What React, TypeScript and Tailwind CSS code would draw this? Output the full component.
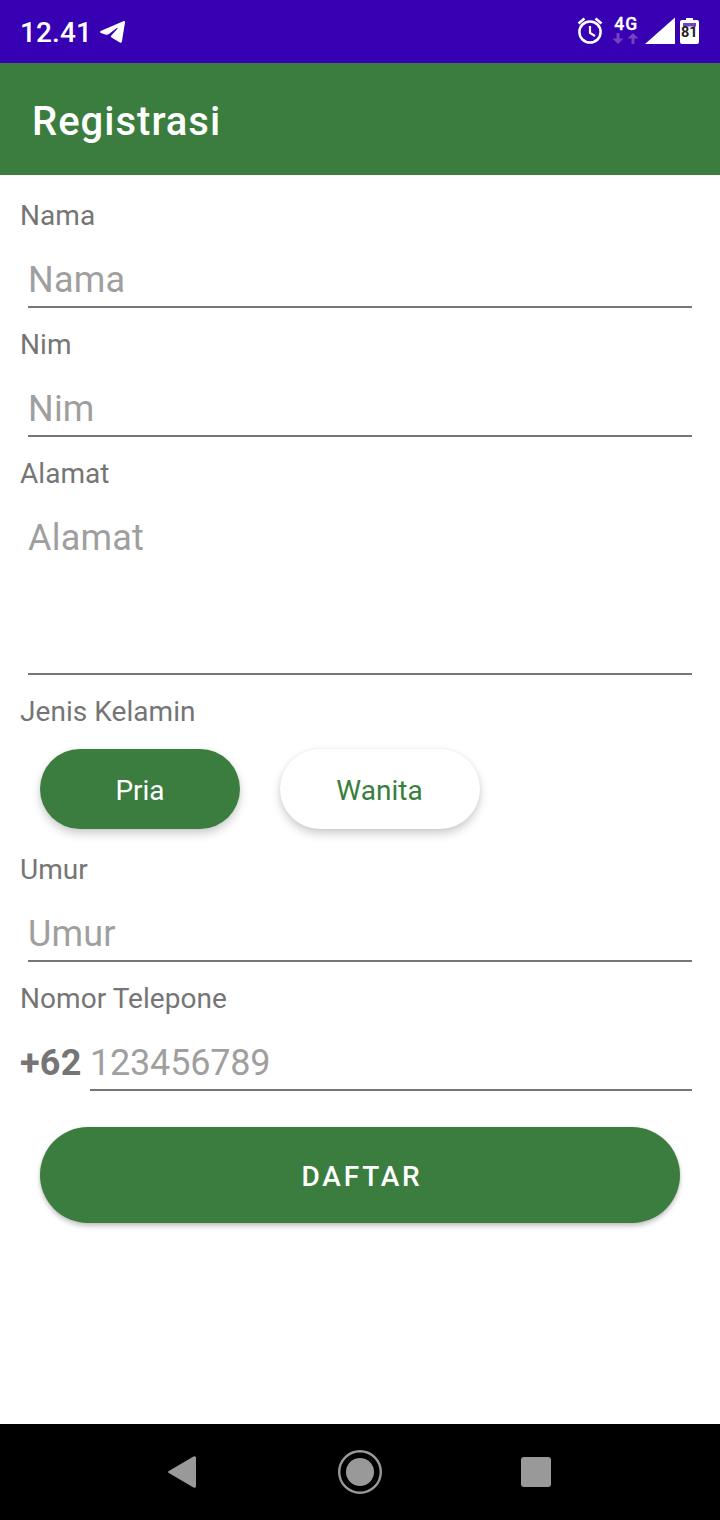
import React from "react";

type FieldProps = { label: string; placeholder: string };

const labelClass =
  "block h-[37px] text-[28px] leading-[37px] tracking-[0.05px] text-[#757575] whitespace-nowrap";
const inputClass =
  "block border-b-2 border-[#757575] bg-transparent pl-0 pr-0 text-[36px] leading-[44px] text-[#757575] placeholder:text-[#9f9f9f] placeholder:opacity-100 outline-none";

function Field({ label, placeholder }: FieldProps) {
  return (
    <label className="mb-[18px] block">
      <span className={labelClass}>{label}</span>
      <span className="block px-2">
        <input
          className={`${inputClass} h-[74px] w-full pt-6 pb-1 tracking-[0.2px]`}
          placeholder={placeholder}
        />
      </span>
    </label>
  );
}

function StatusBar() {
  return (
    <header className="flex h-[63px] items-start bg-[#3700b3] pl-[20px] pr-[20px] text-white">
      <span className="mt-4 text-[28px] leading-[33px] font-medium tracking-[0.1px]">12.41</span>
      <svg className="mt-[21px] ml-[8px] h-[22px] w-[25px]" viewBox="0 0 25 22" fill="currentColor">
        <path d="M0.600 10.100 23.300.3Q25.200-.4 25 1.500L21.900 20.400Q21.500 22.500 19.800 21.500L11.500 16.600Q10.400 15.600 11.300 14.400L17.400 7.700Q17.900 6.400 16.700 7L9 12.900Q7.400 14.100 5.300 13.500L.8 12Q-.5 11 .6 10.100Z" />
      </svg>
      <svg className="mt-[9px] ml-auto h-[40px] w-[123px]" viewBox="577 9 123 40">
        <g fill="none" stroke="#fff">
          <circle cx="590" cy="32" r="10.600" strokeWidth="2.500" />
          <path d="M590 26v7l5 3" strokeWidth="2.200" />
          <path d="m578.500 23.500 6-5m17 5-6-5" strokeWidth="2.700" />
        </g>
        <text x="614.200" y="30.300" fill="#fff" stroke="#fff" strokeWidth="0.300" className="font-medium" fontSize="17.500" letterSpacing="1">4G</text>
        <path fill="#7341c4" d="M616.500 33h3v5.500h4l-5.500 5.500-5.500-5.500h4zM631.500 44h3v-5.500h4l-5.500-5.500-5.500 5.500h4z" />
        <path fill="#fff" d="M645 44 675 17.500V44z" />
        <path fill="#fff" d="M686 18h7v2h4q2 0 2 2v20q0 2-2 2h-15q-2 0-2-2V22q0-2 2-2h4z" />
        <path fill="#7341c4" d="M683 23h13v3.500h-13z" />
        <text x="681" y="37.200" fill="#222" className="font-bold" fontSize="14.500">81</text>
      </svg>
    </header>
  );
}

export default function App() {
  return (
    <div className="flex h-[1520px] w-[720px] flex-col bg-white font-['Roboto',sans-serif]">
      <StatusBar />
      <div className="flex h-[112px] items-center bg-[#3a7d3e] pl-[32px]">
        <h1 className="mt-[6px] text-[40px] leading-[48px] font-medium tracking-[1px] text-white">Registrasi</h1>
      </div>
      <main className="flex-1 px-5 pt-[22px]">
        <Field label="Nama" placeholder="Nama" />
        <Field label="Nim" placeholder="Nim" />
        <label className="mb-[18px] block">
          <span className={labelClass}>Alamat</span>
          <span className="block px-2">
            <textarea
              className={`${inputClass} h-[183px] w-full resize-none pt-6 tracking-[0.2px]`}
              placeholder="Alamat"
            />
          </span>
        </label>
        <span className={labelClass}>Jenis Kelamin</span>
        <div className="mt-[19px] mb-[22px] flex gap-10 pl-5">
          <button className="h-20 w-[200px] rounded-full bg-[#3a7d3e] pt-[4px] text-[28px] text-white shadow-[0_5px_10px_rgba(0,0,0,0.19),0_0_4px_rgba(0,0,0,0.06)]">Pria</button>
          <button className="h-20 w-[200px] rounded-full bg-white pt-[4px] pr-px text-[28px] text-[#3a7d3e] shadow-[0_5px_10px_rgba(0,0,0,0.19),0_0_4px_rgba(0,0,0,0.06)]">Wanita</button>
        </div>
        <Field label="Umur" placeholder="Umur" />
        <span className={labelClass}>Nomor Telepone</span>
        <div className="flex pr-2">
          <span className="w-[70px] pt-6 text-[36px] leading-[44px] font-bold tracking-[0.2px] text-[#757575]">+62</span>
          <input className={`${inputClass} h-[74px] min-w-0 flex-1 pt-6 pb-1 tracking-[-0.2px]`} placeholder="123456789" />
        </div>
        <div className="px-5 pt-9">
          <button className="h-24 w-full rounded-full bg-[#3a7d3e] pt-[4px] pl-[4px] text-[28px] font-medium tracking-[2.8px] text-white shadow-[0_3px_5px_rgba(0,0,0,0.24),0_0_2px_rgba(0,0,0,0.08)]">DAFTAR</button>
        </div>
      </main>
      <nav className="flex h-24 items-center bg-black pl-[168px] text-[#999]">
        <svg className="h-8 w-7" viewBox="0 0 28 32" fill="currentColor">
          <path d="M.8 15 25.500.4Q28-.5 28 2V30Q28 32.500 25.500 31.600L.8 17Q-.7 16 .8 15Z" />
        </svg>
        <svg className="ml-[142px] h-11 w-11" viewBox="0 0 44 44" fill="currentColor">
          <circle cx="22" cy="22" r="14" />
          <circle cx="22" cy="22" r="20.800" fill="none" stroke="currentColor" strokeWidth="2.400" />
        </svg>
        <span className="ml-[139px] size-[30px] rounded-[3px] bg-[#999]" />
      </nav>
    </div>
  );
}
